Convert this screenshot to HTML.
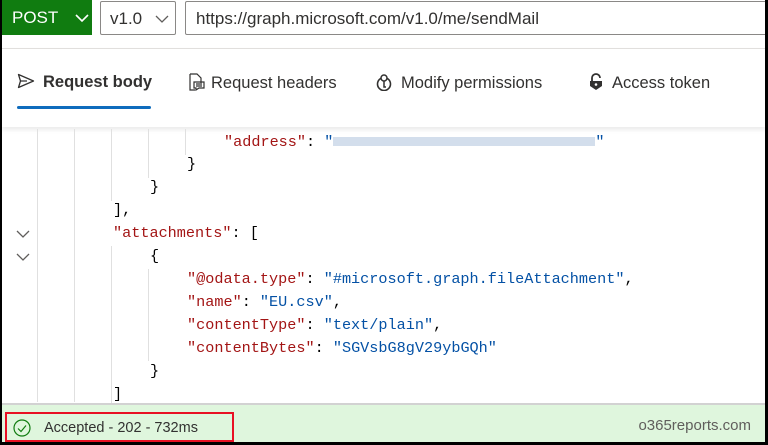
<!DOCTYPE html>
<html><head><meta charset="utf-8"><style>
*{margin:0;padding:0;box-sizing:border-box}
body{width:768px;height:445px;background:#000;position:relative;overflow:hidden;font-family:"Liberation Sans",sans-serif}
#w{position:absolute;left:2px;top:0;width:763px;height:442px;background:#fff;overflow:hidden}
.post{position:absolute;left:-2px;top:0;width:92px;height:35px;background:#107c10;color:#fff;font-size:17px;padding:8px 0 0 12px}
.box{position:absolute;top:1px;height:34px;border:1px solid #8a8886;border-radius:2px;background:#fff;font-size:17px;color:#323130;padding:7px 0 0 9px}
.tabs{position:absolute;top:48px;left:0;right:0;height:79px;border-top:1px solid #e1dfdd;box-shadow:0 3px 4px rgba(0,0,0,.08)}
.tab{position:absolute;top:24px;font-size:16.5px;color:#323130}
.code{position:absolute;left:0;top:131px;font-family:"Liberation Mono",monospace;font-size:15.2px;}
.l{position:absolute;white-space:pre;height:23px;line-height:23px}
.k{color:#a31515}.s{color:#0451a5}
.g{position:absolute;width:1px;background:#e0e0e0}
.chev{position:absolute;left:14px;width:14px;height:8px}
.status{position:absolute;left:0;right:0;top:403px;height:40px;background:#dff6dd;border-top:2px solid #d2d2d2}
</style></head><body><div id="w">
<div class="post">POST <svg width="14" height="10" style="margin-left:12px" viewBox="0 0 14 10"><path d="M1 2l6 6 6-6" stroke="#fff" stroke-width="1.6" fill="none"/></svg></div>
<div class="box" style="left:98px;width:76px">v1.0 <svg width="14" height="10" style="margin-left:8px" viewBox="0 0 14 10"><path d="M1 2l6 6 6-6" stroke="#605e5c" stroke-width="1.3" fill="none"/></svg></div>
<div class="box" style="left:183px;width:590px;padding-left:10px">https://graph.microsoft.com/v1.0/me/sendMail</div>
<div class="tabs">
<div class="tab" style="left:15px;font-weight:bold"><svg width="18" height="16" viewBox="0 0 18 16" style="vertical-align:-2px;margin-right:8px"><path d="M1.5 1.5L16.5 8 1.5 14.5 3.5 8zM3.5 8H10" stroke="#323130" stroke-width="1.3" fill="none" stroke-linejoin="round"/></svg>Request body</div>
<div style="position:absolute;left:15px;top:57px;width:134px;height:3px;background:#0f6cbd;border-radius:2px"></div>
<div class="tab" style="left:185px"><svg width="18" height="18" viewBox="0 0 18 18" style="vertical-align:-3px;margin-right:6px"><path d="M3 1h7l4 4v5M3 1v16h5M7 9h10v6h-5l-3 2v-2H7z M9 11h6M9 13h6" stroke="#323130" stroke-width="1.2" fill="none"/></svg>Request headers</div>
<div class="tab" style="left:373px"><svg width="18" height="18" viewBox="0 0 18 18" style="vertical-align:-3px;margin-right:8px"><circle cx="9" cy="11" r="6.5" stroke="#323130" stroke-width="1.6" fill="none"/><circle cx="9" cy="5" r="3" stroke="#323130" stroke-width="1.5" fill="#fff"/><path d="M9 8v6h2" stroke="#323130" stroke-width="1.5" fill="none"/></svg>Modify permissions</div>
<div class="tab" style="left:586px"><svg width="16" height="18" viewBox="0 0 16 18" style="vertical-align:-3px;margin-right:8px"><path d="M4 8V5a4 4 0 0 1 8 0" stroke="#323130" stroke-width="1.8" fill="none"/><path d="M2 8h12v5l-6 4-6-4z" fill="#323130"/><circle cx="8" cy="11.5" r="1.3" fill="#fff"/></svg>Access token</div>
</div>
<div class="g" style="left:35px;top:129px;height:273px"></div>
<div class="g" style="left:72px;top:129px;height:273px"></div>
<div class="g" style="left:109px;top:129px;height:72px"></div>
<div class="g" style="left:146px;top:129px;height:49px"></div>
<div class="g" style="left:183px;top:129px;height:26px"></div>
<div class="g" style="left:109px;top:246px;height:158px"></div>
<div class="g" style="left:146px;top:269px;height:92px"></div>
<svg class="chev" style="top:230px" viewBox="0 0 14 8"><path d="M1 1l6 6 6-6" stroke="#605e5c" stroke-width="1.3" fill="none"/></svg>
<svg class="chev" style="top:253px" viewBox="0 0 14 8"><path d="M1 1l6 6 6-6" stroke="#605e5c" stroke-width="1.3" fill="none"/></svg>
<div class="code">
<div class="l" style="left:222px;top:0"><span class="k">"address"</span>: <span class="s">"</span><span style="display:inline-block;width:262px;height:9px;background:#d3deec;vertical-align:middle"></span><span class="s">"</span></div>
<div class="l" style="left:185px;top:22px">}</div>
<div class="l" style="left:148px;top:45px">}</div>
<div class="l" style="left:111px;top:68px">],</div>
<div class="l" style="left:111px;top:91px"><span class="k">"attachments"</span>: [</div>
<div class="l" style="left:148px;top:114px">{</div>
<div class="l" style="left:185px;top:137px"><span class="k">"@odata.type"</span>: <span class="s">"#microsoft.graph.fileAttachment"</span>,</div>
<div class="l" style="left:185px;top:160px"><span class="k">"name"</span>: <span class="s">"EU.csv"</span>,</div>
<div class="l" style="left:185px;top:183px"><span class="k">"contentType"</span>: <span class="s">"text/plain"</span>,</div>
<div class="l" style="left:185px;top:206px"><span class="k">"contentBytes"</span>: <span class="s">"SGVsbG8gV29ybGQh"</span></div>
<div class="l" style="left:148px;top:229px">}</div>
<div class="l" style="left:111px;top:252px">]</div>
</div>
<div class="status">
<div style="position:absolute;left:3px;top:7px;width:229px;height:30px;border:2px solid #e81123"></div>
<svg style="position:absolute;left:11px;top:14px" width="18" height="18" viewBox="0 0 18 18"><circle cx="9" cy="9" r="8" stroke="#107c10" stroke-width="1.2" fill="none"/><path d="M5 9.5l3 3 5-6" stroke="#107c10" stroke-width="1.2" fill="none"/></svg>
<div style="position:absolute;left:42px;top:15px;font-size:14.5px;color:#323130">Accepted - 202 - 732ms</div>
<div style="position:absolute;right:14px;top:12px;font-size:15px;color:#605e5c">o365reports.com</div>
</div>
</div></body></html>
